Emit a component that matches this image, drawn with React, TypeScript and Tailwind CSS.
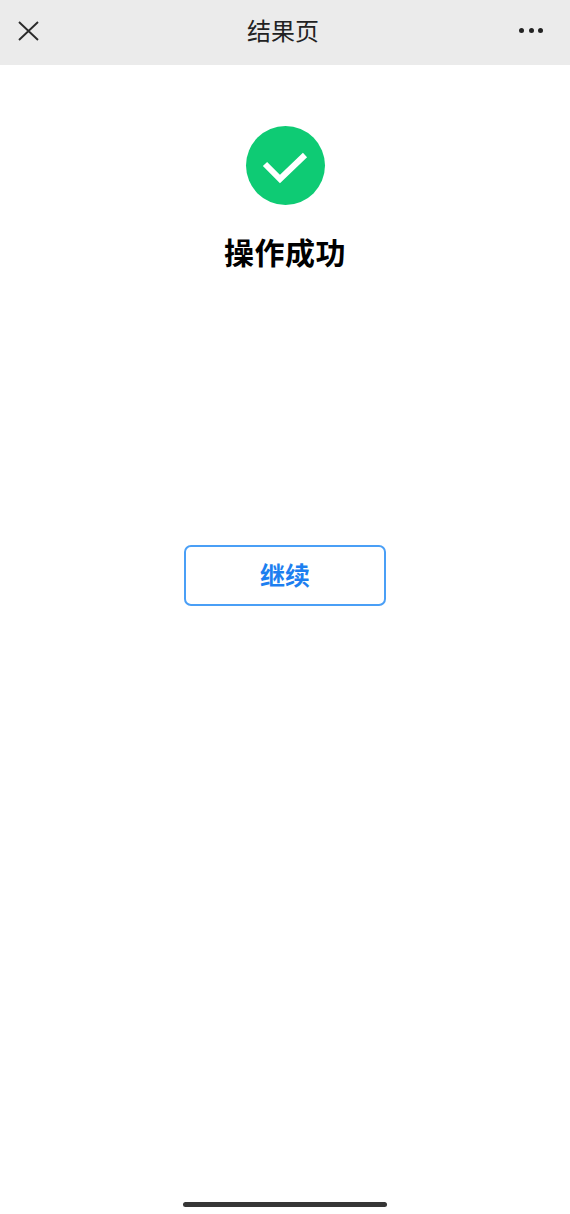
const cjk = 'font-["Noto_Sans_CJK_SC","Noto_Sans",sans-serif]';

export default function App() {
  return (
    <div className={`flex h-[1214px] w-[570px] flex-col overflow-hidden bg-white ${cjk}`}>
      <header className="grid h-[65px] shrink-0 grid-cols-[1fr_auto_1fr] items-center bg-[#ebebeb] px-[18px] pb-[4px]">
        <svg width="21" height="20" viewBox="0 0 21 20" fill="none" stroke="#2b2b2b" strokeWidth="1.9">
          <path d="M1 1l19 18M20 1L1 19" />
        </svg>
        <h1 className="mb-[2px] mr-[4px] text-[24px] leading-[32px] text-[#222]">结果页</h1>
        <div className="flex justify-end gap-[4.5px] pr-[9px]">
          <span className="size-[5px] rounded-full bg-[#222]" />
          <span className="size-[5px] rounded-full bg-[#222]" />
          <span className="size-[5px] rounded-full bg-[#222]" />
        </div>
      </header>

      <main className="flex flex-1 flex-col items-center pt-[61px]">
        <div className="flex size-[79px] items-center justify-center rounded-full bg-[#0ecb74]">
          <svg className="mt-[7px]" width="46" height="34" viewBox="0 0 46 34" fill="none" stroke="#fff" strokeWidth="6">
            <path d="M3 12l15 15L43 3" />
          </svg>
        </div>
        <h2 className="mt-[25px] text-[30px] font-semibold leading-[42px] tracking-[0.5px] text-black">操作成功</h2>
        <button className="mt-[273px] flex h-[61px] w-[202px] items-center justify-center rounded-[7px] border-2 border-[#4a9ff6] bg-white pb-[2px] text-[25px] font-semibold text-[#1d7ff0]">
          继续
        </button>
      </main>

      <div className="flex shrink-0 justify-center pb-[7px]">
        <div className="h-[5px] w-[204px] rounded-full bg-[#363636]" />
      </div>
    </div>
  );
}
